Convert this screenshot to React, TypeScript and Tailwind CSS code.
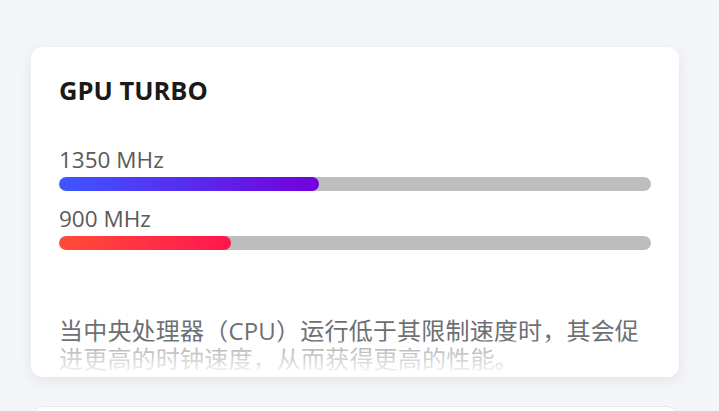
import React from "react";

const font = { fontFamily: '"Open Sans", "Noto Sans CJK SC", sans-serif' };

function Bar({ label, pct, from, to }: { label: string; pct: number; from: string; to: string }) {
  return (
    <div className="flex flex-col">
      <div className="text-[22.5px] leading-[26px] text-[#5a5a5a]">{label}</div>
      <div className="mt-[4px] h-[14px] w-full rounded-full bg-[#bdbdbd] overflow-hidden">
        <div
          className="h-full rounded-full"
          style={{ width: `${pct}%`, backgroundImage: `linear-gradient(to right, ${from}, ${to})` }}
        />
      </div>
    </div>
  );
}

export default function App() {
  return (
    <div className="w-[719px] bg-[#f4f5f9] pt-[47px] overflow-hidden h-[411px]" style={font}>
      <div className="relative ml-[31px] w-[648px] h-[330px] rounded-[12px] bg-white shadow-[0_4px_14px_rgba(0,0,0,0.07)] overflow-hidden pl-[28px] pr-[28px] pt-[28px]">
        <div className="text-[25.5px] leading-[30px] font-bold text-[#1a1a1a]">GPU TURBO</div>
        <div className="mt-[42px]">
          <Bar label="1350 MHz" pct={44} from="#3d57ff" to="#7300dd" />
        </div>
        <div className="mt-[15px]">
          <Bar label="900 MHz" pct={29} from="#ff4c36" to="#ff164f" />
        </div>
        <p className="mt-[67px] text-[24px] leading-[28px] tracking-[0.2px] text-[#6e6f73]">
          当中央处理器（CPU）运行低于其限制速度时，其会促进更高的时钟速度，从而获得更高的性能。
        </p>
        <div className="absolute left-0 right-0 bottom-0 h-[36px] bg-gradient-to-b from-white/40 to-white" />
      </div>
      <div className="ml-[31px] mt-[29px] w-[648px] h-[100px] rounded-[12px] bg-white border border-[#e6e8ee]" />
    </div>
  );
}
